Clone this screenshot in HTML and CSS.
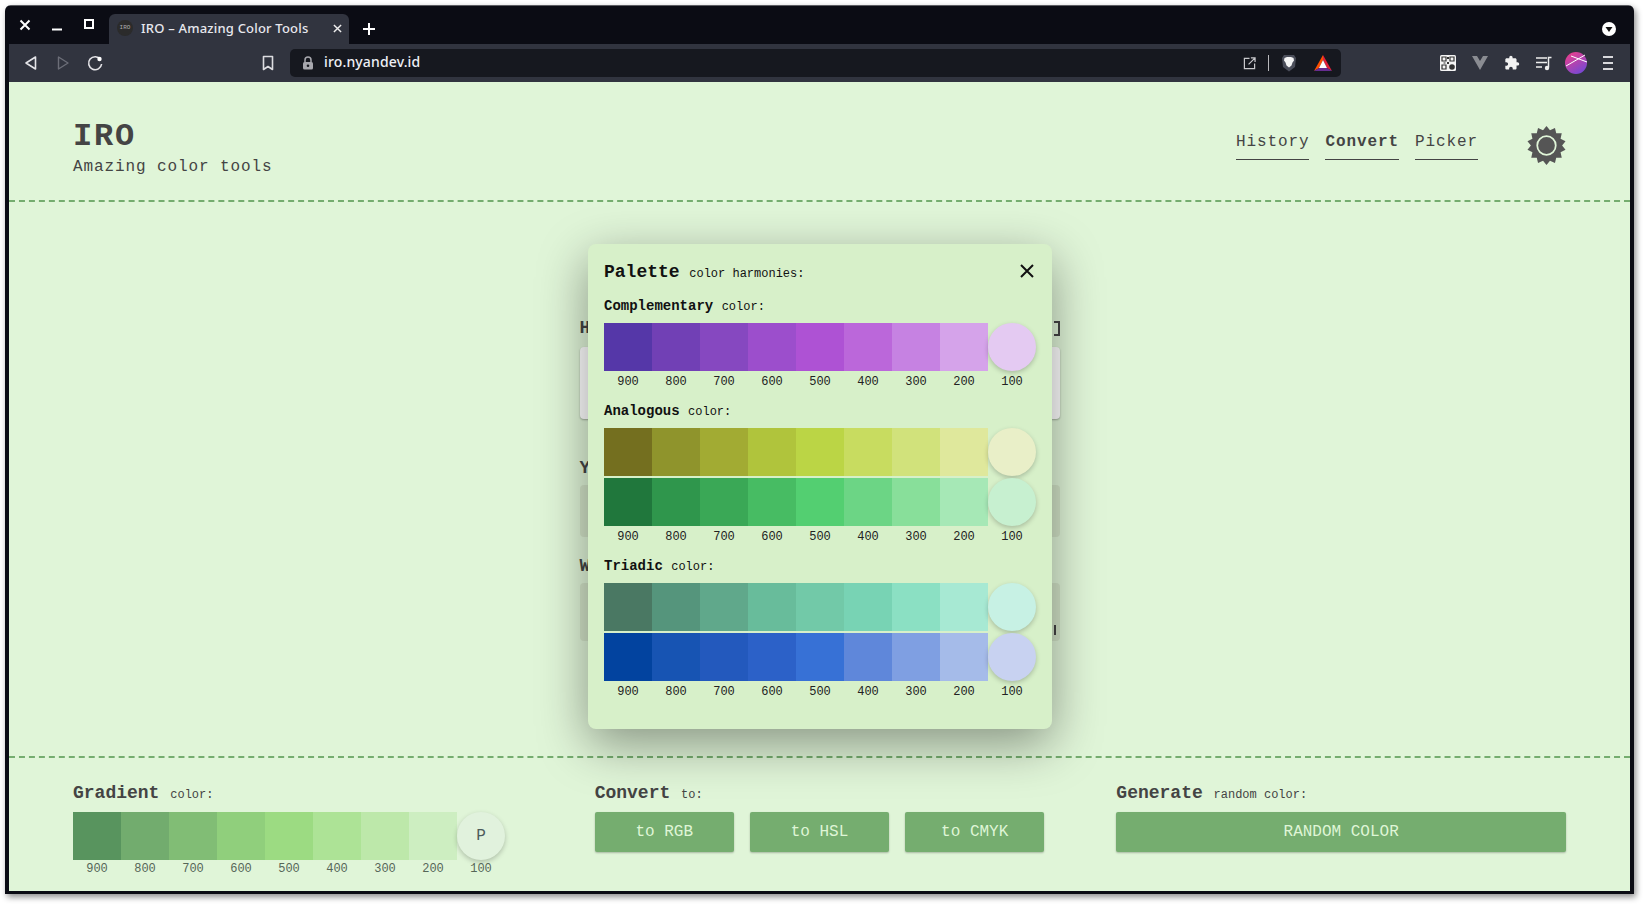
FILE: index.html
```html
<!DOCTYPE html>
<html lang="en">
<head>
  <meta charset="UTF-8">
  <title>IRO - Amazing Color Tools</title>
  <link rel="stylesheet" href="styles.css">
</head>
<body>
  <div class="window">
    <div class="titlebar">
      <div class="win-controls">
        <svg class="win-btn" viewBox="0 0 32 20"><path d="M11.500 5.500l9 9m0-9l-9 9" stroke="#fff" stroke-width="2" fill="none"/></svg>
        <svg class="win-btn" viewBox="0 0 32 20"><path d="M11 14.500h10" stroke="#fff" stroke-width="2" fill="none"/></svg>
        <svg class="win-btn" viewBox="0 0 32 20"><rect x="12" y="5" width="8" height="8" stroke="#fff" stroke-width="2" fill="none"/></svg>
      </div>
      <div class="tab">
        <div class="favicon">IRO</div>
        <span class="tab-title">IRO – Amazing Color Tools</span>
        <svg class="tab-close" viewBox="0 0 10 10"><path d="M1 1l8 8m0-8l-8 8" stroke="#eee" stroke-width="1.600" fill="none"/></svg>
      </div>
      <svg class="new-tab" viewBox="0 0 12 12"><path d="M6 0v12M0 6h12" stroke="#fff" stroke-width="2" fill="none"/></svg>
      <svg class="tab-menu" viewBox="0 0 14 14"><circle cx="7" cy="7" r="7" fill="#fff"/><path d="M3.500 5h7L7 10z" fill="#111"/></svg>
    </div>

    <div class="toolbar">
      <svg class="tool-btn" viewBox="0 0 32 20"><path d="M20.500 4v12L11 10z" stroke="#e4e4e8" stroke-width="1.600" fill="none" stroke-linejoin="round"/></svg>
      <svg class="tool-btn" viewBox="0 0 32 20"><path d="M11.500 4v12L21 10z" stroke="#6c6e78" stroke-width="1.400" fill="none" stroke-linejoin="round"/></svg>
      <svg class="tool-btn" viewBox="0 0 32 20"><path d="M21.500 6.500A6.500 6.500 0 1 0 22.600 11" stroke="#e4e4e8" stroke-width="1.600" fill="none"/><circle cx="20.500" cy="6" r="2.200" fill="#fff"/></svg>
      <svg class="tool-btn bookmark" viewBox="0 0 32 20"><path d="M11.500 3.500h9v13L16 13.500l-4.500 3z" stroke="#dcdce0" stroke-width="1.600" fill="none" stroke-linejoin="round"/></svg>
      <div class="address">
        <svg class="lock" viewBox="0 0 12 14"><path d="M3 6V4a3 3 0 0 1 6 0v2" stroke="#a8a8ae" stroke-width="1.500" fill="none"/><rect x="1" y="6" width="10" height="7.500" rx="1.500" fill="#a8a8ae"/><circle cx="6" cy="9.700" r="1.300" fill="#16181f"/></svg>
        <span class="url">iro.nyandev.id</span>
        <svg class="addr-icon open-icon" viewBox="0 0 14 14"><path d="M7 1.500H1.500v11h11V7M6 8l6.500-6.500M8.500 1h4.500v4.500" stroke="#c8c8cc" stroke-width="1.300" fill="none"/></svg>
        <div class="addr-sep"></div>
        <svg class="addr-icon brave" viewBox="0 0 16 18"><path d="M3 1h10l2 3-1 9-6 4.500L2 13 1 4z" fill="#4a4d59"/><path d="M3.500 4l2.500-1h4l2.500 1 .5 2.500-1.500 2-1 3L8 13.500 5.500 11.500l-1-3L3 6.500z" fill="#f4f4f4"/></svg>
        <svg class="addr-icon bat" viewBox="0 0 18 16"><path d="M9 0L0 16l5-3 4-8z" fill="#ff5000"/><path d="M9 0l9 16-5-3-4-8z" fill="#e0203c"/><path d="M0 16h18l-5-3H5z" fill="#662d91"/><path d="M9 5l4 8H5z" fill="#fff"/></svg>
      </div>
      <svg class="tool-btn ext-first" viewBox="0 0 32 20">
        <rect x="8" y="2" width="16" height="16" rx="1.500" fill="#f4f4f4"/>
        <path d="M10 4h4v4h-4zM18 4h4v4h-4zM10 12h4v4h-4z" fill="none" stroke="#333" stroke-width="1.200"/>
        <path d="M15 4h2v2h-2zM15 9h2v2h-2zM11.500 9.500h2v1h-2z" fill="#333"/>
        <circle cx="20" cy="14" r="2.800" fill="#333"/>
      </svg>
      <svg class="tool-btn" viewBox="0 0 32 20"><path d="M8 3h5l3 5 3-5h5l-8 14z" fill="#8a8c92"/></svg>
      <svg class="tool-btn" viewBox="0 0 32 20"><path transform="translate(8 2) scale(.66)" d="M20.500 11H19V7c0-1.100-.9-2-2-2h-4V3.500C13 2.120 11.880 1 10.500 1S8 2.120 8 3.500V5H4c-1.100 0-1.990.9-1.990 2v3.800H3.500c1.490 0 2.700 1.210 2.700 2.700s-1.210 2.700-2.700 2.700H2V20c0 1.100.9 2 2 2h3.800v-1.500c0-1.490 1.210-2.700 2.700-2.700 1.490 0 2.700 1.210 2.700 2.700V22H17c1.100 0 2-.9 2-2v-4h1.500c1.380 0 2.500-1.120 2.500-2.500S21.880 11 20.500 11z" fill="#f2f2f2"/></svg>
      <svg class="tool-btn" viewBox="0 0 32 20"><path d="M8 5h11M8 9.500h11M8 14h6" stroke="#eee" stroke-width="1.500" fill="none"/><path d="M20.500 14.500V4.500h3" stroke="#eee" stroke-width="1.500" fill="none"/><circle cx="19" cy="15" r="2.200" fill="#eee"/></svg>
      <svg class="tool-btn" viewBox="0 0 32 24">
        <defs><linearGradient id="avatarFill" x1="0.200" y1="0" x2="0.800" y2="1"><stop offset="0" stop-color="#ec3f8c"/><stop offset="1" stop-color="#7048d8"/></linearGradient></defs>
        <circle cx="16" cy="12" r="11" fill="url(#avatarFill)"/>
        <path d="M6 15L25 4M11 5l16 6" stroke="#fff" stroke-width="1" fill="none"/>
      </svg>
      <svg class="tool-btn" viewBox="0 0 32 20"><path d="M11 4h10M11 10h10M11 16h10" stroke="#d8d8dc" stroke-width="1.800" fill="none"/></svg>
    </div>

    <div class="page">
      <header class="site-header">
        <div class="brand">
          <h1 class="brand-name">IRO</h1>
          <p class="brand-tagline">Amazing color tools</p>
        </div>
        <div class="header-right">
          <nav class="site-nav">
            <a class="nav-link">History</a>
            <a class="nav-link nav-active">Convert</a>
            <a class="nav-link">Picker</a>
          </nav>
          <svg class="theme-icon" viewBox="0 0 40 40">
            <polygon fill="#555" points="20,0 23.56,4.40 28.68,1.98 29.98,7.49 35.64,7.53 34.42,13.06 39.50,15.55 36,20 39.50,24.45 34.42,26.94 35.64,32.47 29.98,32.51 28.68,38.02 23.56,35.60 20,40 16.44,35.60 11.32,38.02 10.02,32.51 4.36,32.47 5.58,26.94 0.50,24.45 4,20 0.50,15.55 5.58,13.06 4.36,7.53 10.02,7.49 11.32,1.98 16.44,4.40"/>
            <circle cx="20" cy="20" r="9.500" fill="#555" stroke="#e0f5d8" stroke-width="1.800"/>
          </svg>
        </div>
      </header>

      <main class="content">
        <div class="form-panel">
          <div class="field-head field-head-first"><span>H</span><span class="copy-mark"></span></div>
          <div class="field-box field-box-white"></div>
          <div class="field-head"><span>Y</span></div>
          <div class="field-box field-box-short"></div>
          <div class="field-head field-head-close"><span>W</span></div>
          <div class="field-box field-box-mid"><span class="field-glyph"></span></div>
        </div>

        <section class="modal">
          <div class="modal-head">
            <div><span class="modal-title">Palette</span> <span class="small-note">color harmonies:</span></div>
            <svg class="modal-close" viewBox="0 0 16 16"><path d="M2 2l12 12m0-12L2 14" stroke="#111" stroke-width="2" fill="none"/></svg>
          </div>

          <div class="group-title"><b>Complementary</b> <span class="small-note">color:</span></div>
          <div class="swatch-row">
            <div class="swatch" style="background:#5537a8"></div>
            <div class="swatch" style="background:#7140b5"></div>
            <div class="swatch" style="background:#8648c0"></div>
            <div class="swatch" style="background:#9c4ecc"></div>
            <div class="swatch" style="background:#ae52d4"></div>
            <div class="swatch" style="background:#bb67da"></div>
            <div class="swatch" style="background:#c682e2"></div>
            <div class="swatch" style="background:#d5a3ea"></div>
            <div class="swatch swatch-round" style="background:#e4caf2"></div>
          </div>
          <div class="scale-labels"><span>900</span><span>800</span><span>700</span><span>600</span><span>500</span><span>400</span><span>300</span><span>200</span><span>100</span></div>

          <div class="group-title"><b>Analogous</b> <span class="small-note">color:</span></div>
          <div class="swatch-row">
            <div class="swatch" style="background:#746f1f"></div>
            <div class="swatch" style="background:#8f942c"></div>
            <div class="swatch" style="background:#a2ab33"></div>
            <div class="swatch" style="background:#b0c43c"></div>
            <div class="swatch" style="background:#bbd545"></div>
            <div class="swatch" style="background:#c8dc60"></div>
            <div class="swatch" style="background:#d1e27b"></div>
            <div class="swatch" style="background:#dfe89c"></div>
            <div class="swatch swatch-round" style="background:#e9efc8"></div>
          </div>
          <div class="swatch-row">
            <div class="swatch" style="background:#20773c"></div>
            <div class="swatch" style="background:#2f964c"></div>
            <div class="swatch" style="background:#3aa856"></div>
            <div class="swatch" style="background:#47bc63"></div>
            <div class="swatch" style="background:#53cf71"></div>
            <div class="swatch" style="background:#6cd585"></div>
            <div class="swatch" style="background:#88df9a"></div>
            <div class="swatch" style="background:#a6e8b6"></div>
            <div class="swatch swatch-round" style="background:#c7f0d0"></div>
          </div>
          <div class="scale-labels"><span>900</span><span>800</span><span>700</span><span>600</span><span>500</span><span>400</span><span>300</span><span>200</span><span>100</span></div>

          <div class="group-title"><b>Triadic</b> <span class="small-note">color:</span></div>
          <div class="swatch-row">
            <div class="swatch" style="background:#4a7863"></div>
            <div class="swatch" style="background:#55957c"></div>
            <div class="swatch" style="background:#60a88b"></div>
            <div class="swatch" style="background:#68bc9b"></div>
            <div class="swatch" style="background:#72c9a8"></div>
            <div class="swatch" style="background:#78d3b4"></div>
            <div class="swatch" style="background:#8be0c3"></div>
            <div class="swatch" style="background:#a7e9d3"></div>
            <div class="swatch swatch-round" style="background:#c7f1e4"></div>
          </div>
          <div class="swatch-row">
            <div class="swatch" style="background:#02439f"></div>
            <div class="swatch" style="background:#1754b3"></div>
            <div class="swatch" style="background:#2359bd"></div>
            <div class="swatch" style="background:#2c61c8"></div>
            <div class="swatch" style="background:#3771d6"></div>
            <div class="swatch" style="background:#5f87da"></div>
            <div class="swatch" style="background:#7f9fe2"></div>
            <div class="swatch" style="background:#a5bbe9"></div>
            <div class="swatch swatch-round" style="background:#c8d2f1"></div>
          </div>
          <div class="scale-labels"><span>900</span><span>800</span><span>700</span><span>600</span><span>500</span><span>400</span><span>300</span><span>200</span><span>100</span></div>
        </section>
      </main>

      <footer class="site-footer">
        <div class="footer-col">
          <div class="footer-title"><b>Gradient</b> <span class="small-note">color:</span></div>
          <div class="swatch-row">
            <div class="swatch" style="background:#58945e"></div>
            <div class="swatch" style="background:#72ac6e"></div>
            <div class="swatch" style="background:#81bd75"></div>
            <div class="swatch" style="background:#90cf7c"></div>
            <div class="swatch" style="background:#9cdb82"></div>
            <div class="swatch" style="background:#ade396"></div>
            <div class="swatch" style="background:#bde8aa"></div>
            <div class="swatch" style="background:#cdeec1"></div>
            <div class="swatch swatch-round swatch-picked" style="background:#e1f2dd">P</div>
          </div>
          <div class="scale-labels scale-labels-soft"><span>900</span><span>800</span><span>700</span><span>600</span><span>500</span><span>400</span><span>300</span><span>200</span><span>100</span></div>
        </div>
        <div class="footer-col">
          <div class="footer-title"><b>Convert</b> <span class="small-note">to:</span></div>
          <div class="btn-row">
            <button class="action-btn">to RGB</button>
            <button class="action-btn">to HSL</button>
            <button class="action-btn">to CMYK</button>
          </div>
        </div>
        <div class="footer-col">
          <div class="footer-title"><b>Generate</b> <span class="small-note">random color:</span></div>
          <div class="btn-row">
            <button class="action-btn">RANDOM COLOR</button>
          </div>
        </div>
      </footer>
    </div>
  </div>
</body>
</html>
```

FILE: styles.css
```css
* {
  box-sizing: border-box;
}

body {
  margin: 0;
  height: 904px;
  padding: 5px 9px 10px 5px;
  overflow: hidden;
  background: white;
  font-family: "Liberation Mono", monospace;
  color: #444;
}

/* browser frame */
.window {
  height: 100%;
  display: flex;
  flex-direction: column;
  border: 4px solid #0b0c14;
  border-top: 1px solid #5c5d62;
  border-bottom-width: 3px;
  border-radius: 6px 6px 0 0;
  box-shadow: 2px 3px 6px rgba(0, 0, 0, 0.45);
  background: #0b0c14;
}

.titlebar {
  height: 38px;
  flex-shrink: 0;
  display: flex;
  align-items: flex-end;
  background: #0b0c14;
}

.win-controls {
  width: 100px;
  height: 38px;
  display: flex;
  align-items: flex-start;
  padding-top: 9px;
}

.win-btn {
  width: 32px;
  height: 20px;
}

.tab {
  width: 240px;
  height: 30px;
  display: flex;
  align-items: center;
  padding: 0 8px 2px;
  background: #31343f;
  border-radius: 6px 6px 0 0;
  font-family: "Noto Sans", sans-serif;
  font-size: 13px;
  font-weight: 500;
  letter-spacing: 0.2px;
  color: #e8e8ee;
}

.favicon {
  width: 16px;
  height: 16px;
  flex-shrink: 0;
  border-radius: 50%;
  background: #2b2b2b;
  color: #aaa;
  font-family: "Liberation Mono", monospace;
  font-size: 6px;
  line-height: 16px;
  letter-spacing: 0;
  text-align: center;
}

.tab-title {
  margin-left: 8px;
  white-space: nowrap;
}

.tab-close {
  width: 9px;
  height: 9px;
  margin-left: auto;
  margin-right: -1px;
}

.new-tab {
  width: 12px;
  height: 12px;
  margin: 0 0 9px 14px;
}

.tab-menu {
  width: 14px;
  height: 14px;
  margin: 0 14px 8px auto;
}

.toolbar {
  height: 38px;
  flex-shrink: 0;
  display: flex;
  align-items: center;
  padding: 0 6px;
  background: #31343f;
}

.tool-btn {
  width: 32px;
  height: 20px;
  flex-shrink: 0;
}

.tool-btn:nth-last-child(2) {
  height: 24px;
}

.bookmark {
  margin-left: 141px;
}

.address {
  width: 1051px;
  height: 28px;
  margin-left: 6px;
  display: flex;
  align-items: center;
  padding: 0 9px 0 12px;
  background: #16181f;
  border-radius: 5px;
}

.lock {
  width: 12px;
  height: 14px;
}

.url {
  margin: 0 0 3px 10px;
  font-family: "Noto Sans", sans-serif;
  font-size: 14px;
  font-weight: 500;
  letter-spacing: 0.15px;
  color: #eef0f6;
}

.addr-icon {
  flex-shrink: 0;
}

.open-icon {
  width: 13px;
  height: 13px;
  margin-left: auto;
}

.addr-sep {
  width: 1px;
  height: 16px;
  margin: 0 12px;
  background: #b8b8bc;
}

.brave {
  width: 16px;
  height: 18px;
}

.bat {
  width: 18px;
  height: 16px;
  margin-left: 17px;
}

.ext-first {
  margin-left: auto;
}

/* page */
.page {
  flex: 1;
  display: flex;
  flex-direction: column;
  background: #e0f5d8;
}

.site-header {
  height: 120px;
  flex-shrink: 0;
  display: flex;
  align-items: flex-start;
  justify-content: space-between;
  padding: 39px 64px 0;
  border-bottom: 2px dashed #75ad6f;
}

.brand-name {
  margin: 0;
  font-size: 32px;
  line-height: 32px;
  font-weight: 700;
  letter-spacing: 1.8px;
}

.brand-tagline {
  margin: 4px 0 0;
  font-size: 16px;
  line-height: 20px;
  letter-spacing: 0.9px;
}

.header-right {
  display: flex;
  align-items: flex-start;
}

.site-nav {
  display: flex;
  gap: 16px;
  margin: 9px 49px 0 0;
}

.nav-link {
  padding-bottom: 5px;
  font-size: 16px;
  line-height: 24px;
  letter-spacing: 0.9px;
  border-bottom: 1px solid #444;
}

.nav-active {
  font-weight: 700;
}

.theme-icon {
  width: 39px;
  height: 39px;
  margin-top: 5px;
}

.content {
  flex: 1;
  position: relative;
}

/* form sitting behind the open modal */
.form-panel {
  width: 480px;
  margin: 0 auto;
  padding-top: 114px;
}

.field-head {
  display: flex;
  justify-content: space-between;
  height: 24px;
  margin-top: 37px;
  margin-bottom: 5px;
  font-size: 18px;
  font-weight: 700;
  line-height: 24px;
}

.field-head-first {
  margin-top: 0;
  margin-bottom: 7px;
}

.field-head-close {
  margin-top: 17px;
}

.copy-mark {
  width: 6px;
  height: 15px;
  margin-top: 5px;
  border: 2px solid #444;
  border-left: none;
}

.field-box {
  height: 52px;
  background: #d3e4c8;
  border-radius: 4px;
}

.field-box-white {
  height: 72px;
  background: white;
  box-shadow: 0 1px 2px rgba(0, 0, 0, 0.3);
}

.field-box-mid {
  height: 58px;
  display: flex;
  align-items: flex-end;
  justify-content: flex-end;
  padding: 0 4px 6px 0;
}

.field-glyph {
  width: 4px;
  height: 10px;
  border-right: 2px solid #444;
}

/* palette modal */
.modal {
  position: absolute;
  top: 42px;
  left: 579px;
  width: 464px;
  height: 485px;
  padding: 16px;
  background: #d7f0c9;
  border-radius: 8px;
  box-shadow: 0 15px 50px rgba(0, 0, 0, 0.4);
  color: #111;
}

.modal-head {
  display: flex;
  align-items: flex-start;
  justify-content: space-between;
  height: 26px;
  line-height: 22px;
  padding-top: 1px;
}

.modal-title {
  font-size: 18px;
  font-weight: 700;
}

.small-note {
  font-size: 12px;
  font-weight: 400;
}

.modal-close {
  width: 16px;
  height: 16px;
  margin: 2px 1px 0 0;
}

.group-title {
  height: 20px;
  margin-top: 10px;
  margin-bottom: 7px;
  font-size: 14px;
  line-height: 20px;
}

.swatch-row {
  display: flex;
  height: 48px;
}

.swatch-row + .swatch-row {
  margin-top: 2px;
}

.swatch {
  width: 48px;
  height: 48px;
  flex-shrink: 0;
}

.swatch-round {
  border-radius: 50%;
  box-shadow: 0 2px 5px rgba(0, 0, 0, 0.22);
}

.swatch-picked {
  font-size: 16px;
  line-height: 48px;
  text-align: center;
  color: #4d5b5b;
}

.scale-labels {
  display: flex;
  height: 18px;
  margin-top: 2px;
  font-size: 12px;
  line-height: 18px;
  color: #222;
}

.scale-labels span {
  width: 48px;
  text-align: center;
}

.scale-labels-soft {
  margin-top: 0;
  color: #566658;
}

/* footer tools */
.site-footer {
  height: 135px;
  flex-shrink: 0;
  display: grid;
  grid-template-columns: repeat(3, 1fr);
  gap: 72px;
  padding: 22px 64px 0;
  border-top: 2px dashed #75ad6f;
}

.footer-title {
  height: 26px;
  margin-bottom: 6px;
  font-size: 18px;
  line-height: 26px;
}

.btn-row {
  display: flex;
  gap: 16px;
}

.action-btn {
  flex: 1;
  height: 40px;
  padding: 0;
  border: none;
  border-radius: 2px;
  background: #75ad6f;
  box-shadow: 0 1px 2px rgba(0, 0, 0, 0.25);
  color: #dff5d6;
  font-family: "Liberation Mono", monospace;
  font-size: 16px;
}
```
